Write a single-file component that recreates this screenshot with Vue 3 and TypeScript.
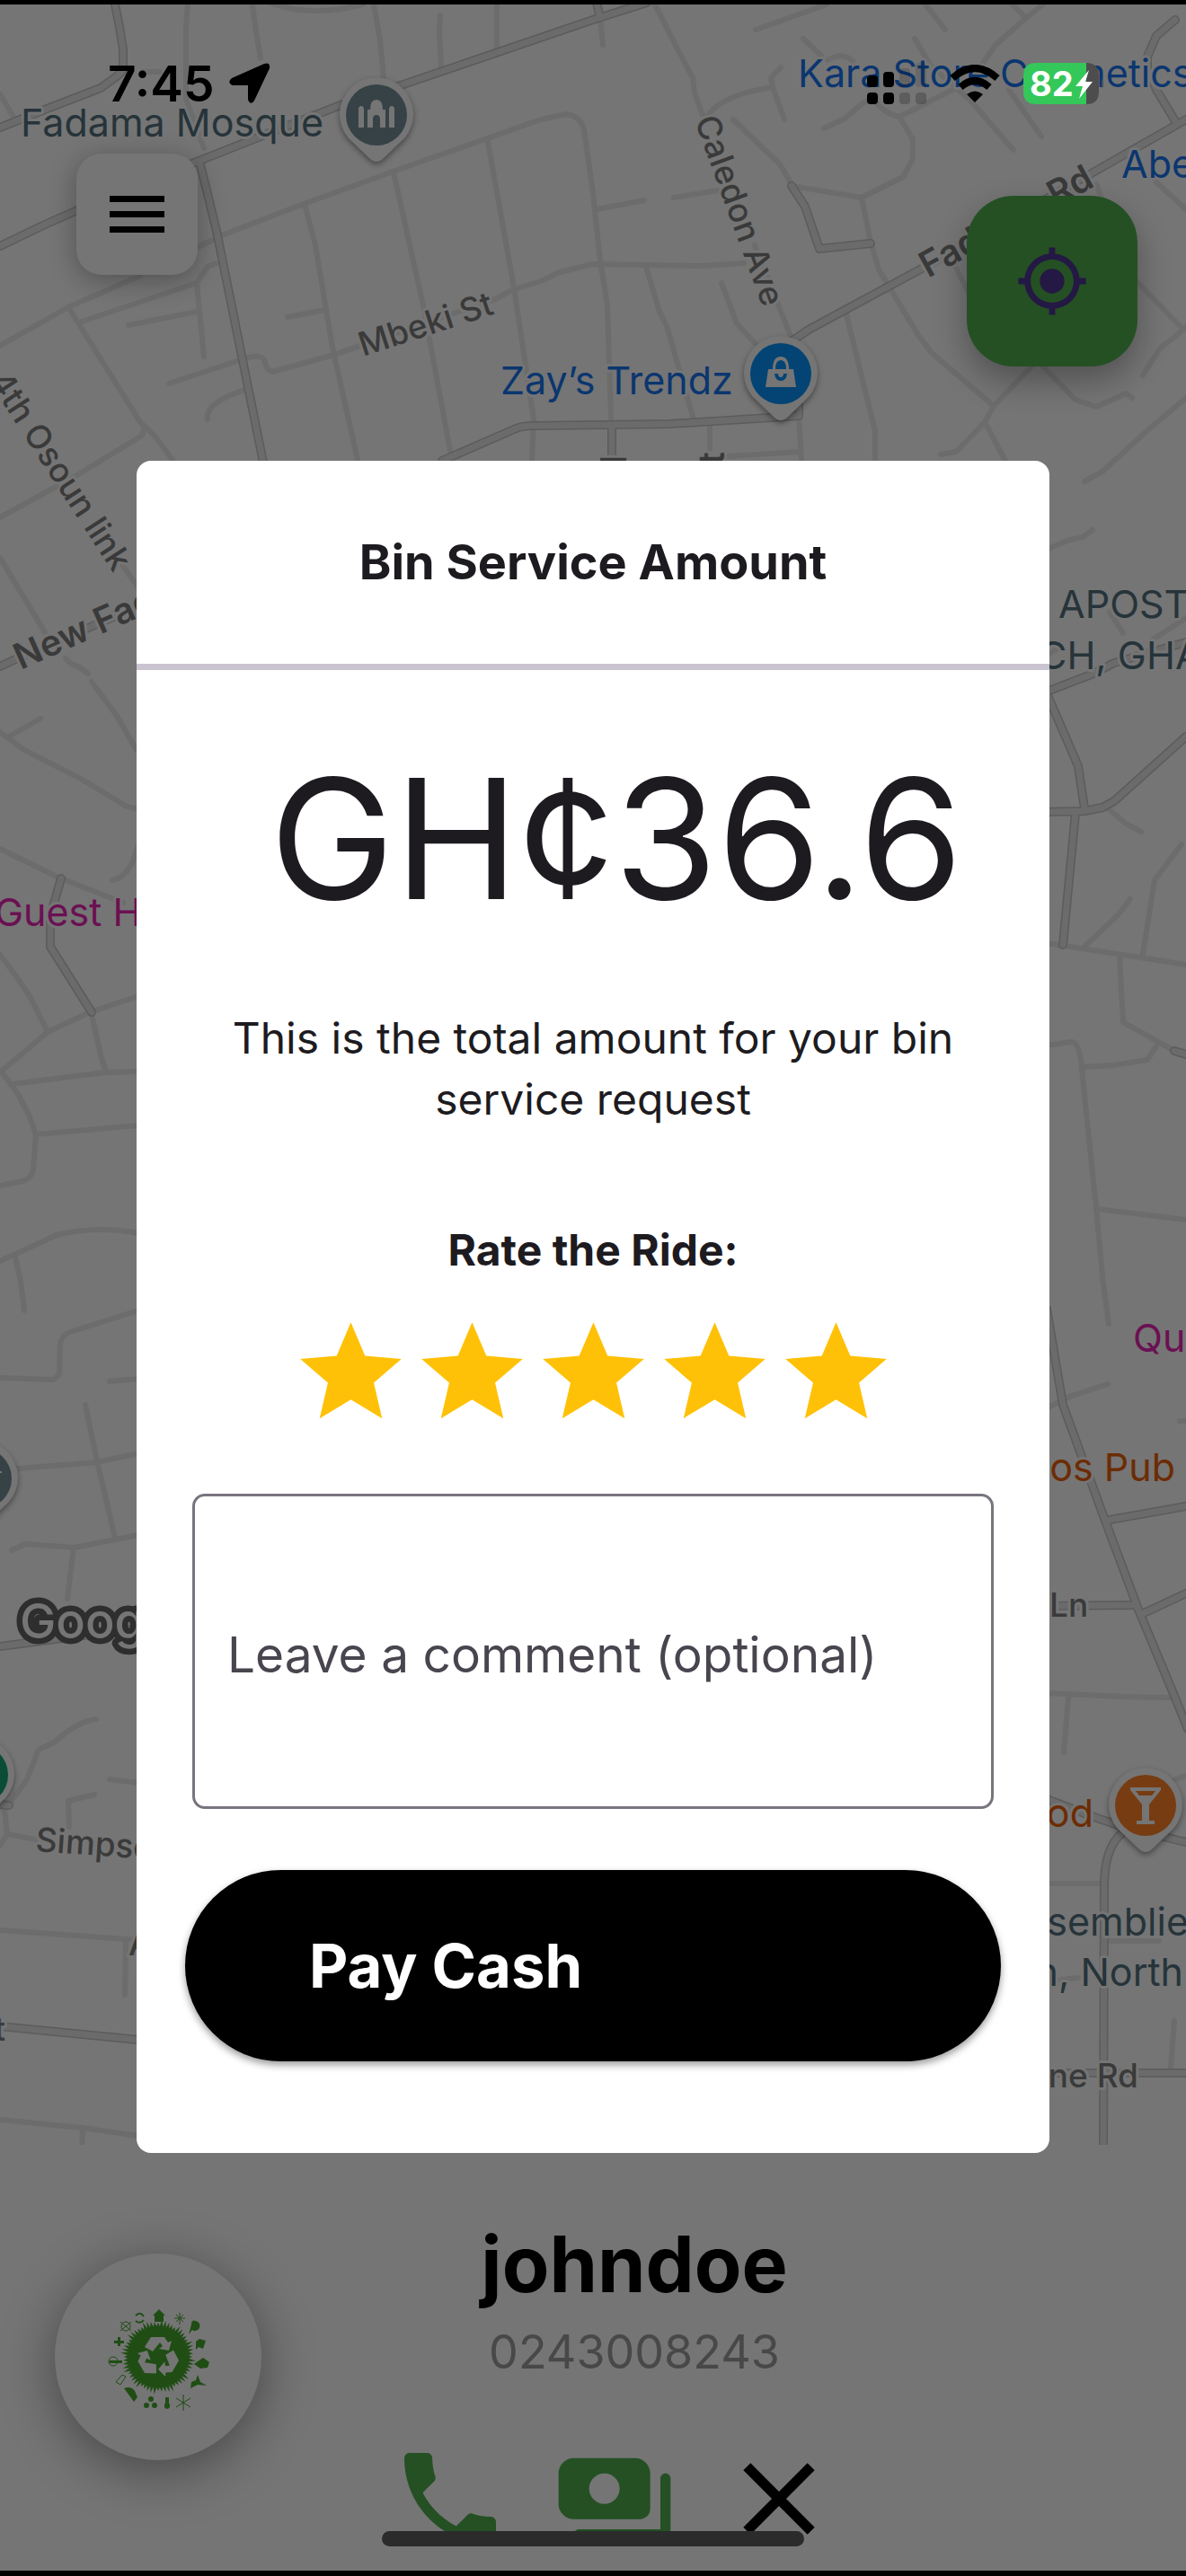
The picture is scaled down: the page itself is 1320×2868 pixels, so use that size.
<script setup lang="ts">
import { ref } from 'vue'

interface Label {
  text: string
  x: number
  y: number
  kind: 'poi' | 'shop' | 'lodging' | 'food' | 'road' | 'highway'
  angle?: number
  anchor?: 'start' | 'end'
}

interface Pin {
  x: number
  y: number
  color: string
  glyph: string
}

const rating = ref(5)
const comment = ref('')
const stars = [1, 2, 3, 4, 5]

const streets: string[] = [
  'M209 5L207 30V110L227 165', 'M281 5L285 35L290 65', 'M300 3Q345 20 404 5', 'M416 5L423 45L427 87',
  'M490 17L489 35L491 75', 'M553 5V53', 'M0 105L15 130', 'M160 80H178',
  'M221 275L247 262L338 227L440 190L602 133L631 127Q647 130 650 145L660 215L668 290L676 340L680 465',
  'M339 227L351 273L370 387L398 512', 'M438 192L471 340L503 512', 'M543 158L572 320L594 467L592 512',
  'M410 382L372 395L303 414Q296 412 294 400Q288 394 273 399L188 427',
  'M380 392L551 333L572 322L602 313L623 303L660 294L782 296L828 293',
  'M320 353L362 345', 'M241 293L231 297L219 315L88 359M219 315L227 397', 'M143 362L219 347',
  'M0 385L76 342L156 307', 'M76 342L156 470L172 485L192 512', 'M160 478L158 485L84 530L0 576',
  'M231 467Q228 448 273 434', 'M720 -10L729 5L748 43L771 87L773 103L782 128', 'M668 20L671 50',
  'M841 33L920 5', 'M1030 5L1052 33', 'M1127 5L1142 20M1161 5L1142 20L1108 50L1094 70',
  'M894 43L914 62M921 67Q938 57 949 68', 'M1018 43L1035 72L1081 113L1128 167', 'M1123 100L1159 152',
  'M788 128Q805 105 860 97L858 87L869 75M860 97L873 133', 'M816 133L868 183L881 205',
  'M881 207L959 220L1005 197L1016 177V155L1001 130Q982 126 970 108M1001 130L1060 100',
  'M917 143L940 132L960 115L975 108',
  'M959 220L969 270L978 300L990 320L1022 373L1037 393L1106 452', 'M840 273L881 377',
  'M803 315L820 360L841 383', 'M719 297L734 347L742 363L772 467', 'M942 350L974 480V513',
  'M664 233L717 223M750 220L799 212', 'M1287 203L1320 233', 'M1220 205L1262 310L1317 367L1291 388L1272 418M1317 367L1320 364',
  'M1060 290L1080 330', 'M1148 408L1106 452L1096 470L1119 513M1096 470L1064 503L1047 506',
  'M1161 408L1197 445L1220 453L1253 438L1260 443', 'M1320 443L1275 481L1227 525L1207 536',
  'M790 472V500M811 508L889 503M889 463L892 513',
  'M0 621L50 704M73 733Q80 741 87 742L98 750M102 759L130 797L152 835', 'M45 800L10 820',
  'M0 815L27 835L90 867L133 893Q142 900 154 900', 'M137 630L154 655', 'M154 940Q146 976 125 980',
  'M0 945L63 976L137 1005', 'M0 1063L13 1080L33 1109L53 1149', 'M0 1194L53 1149L100 1127L154 1109',
  'M102 1129L112 1175L117 1190', 'M13 1207L117 1194L154 1193',
  'M3 1195L20 1218L32 1241L40 1263L37 1303Q34 1313 25 1315L0 1320', 'M40 1263L154 1253',
  'M0 1404L63 1375Q107 1364 154 1373', 'M17 1399L23 1427L27 1459',
  'M0 1534L60 1536L66 1530L67 1495Q70 1486 78 1483L154 1459', 'M122 1538L154 1535', 'M95 1564L108 1627L128 1712',
  'M20 1635L108 1628L154 1618', 'M13 1726L28 1719L83 1723L154 1709', 'M82 1723L75 1780',
  'M107 1914Q87 1916 60 1940L43 1948L30 1981L15 2002L5 2015L8 2042L40 2048M8 2042L0 2055',
  'M122 1981L154 1985', 'M105 1998L76 2005L77 2034', 'M0 2149L154 2160M140 2160L139 2221',
  'M0 2360L92 2369L154 2378M92 2369L91 2400',
  'M1165 612L1190 601L1205 598L1216 590', 'M1283 712L1320 688M1235 681L1250 705M1165 730L1180 720',
  'M1233 900L1253 917L1270 926', 'M1315 940L1285 980L1272 1062', 'M1258 1001L1245 1018L1208 1053',
  'M1165 1050L1320 1074', 'M1246 1065L1250 1138L1307 1170', 'M1165 1164L1192 1160Q1200 1160 1203 1180L1220 1345L1228 1430L1234 1474',
  'M1205 1188L1240 1186L1277 1180L1288 1163', 'M1220 1346L1320 1358', 'M1165 1568L1190 1555L1233 1541',
  'M1313 1582H1320', 'M1165 1885L1250 1889L1303 1890M1189 1890L1184 1951', 'M1305 1982L1320 1977',
  'M1165 2097H1228M1233 2161H1290', 'M1307 2250L1303 2302', 'M1165 2206L1200 2202',
]

const avenues: string[] = [
  'M128 5L133 30L137 55V78L130 85L112 98L55 120L0 142',
  'M662 -5L668 20M720 3L660 22L446 95L379 117L219 180L84 235L50 250L0 274',
  'M222 180L232 220L242 262L293 515', 'M492 513L572 478Q580 474 594 474L745 472L889 463V450',
  'M881 207L896 230L912 277L969 271', 'M881 380L900 367L1024 300L1220 190L1320 133',
  'M1308 22L1287 40L1277 63V75L1287 100L1310 138', 'M681 477V513', 'M0 742L15 735L154 675',
  'M68 978L56 1020V1054L102 1127', 'M0 1833L154 1813', 'M-10 2008L10 2010', 'M-10 2255L154 2271',
  'M1165 770L1217 750L1240 738L1320 715', 'M1165 772L1200 853L1207 900M1165 904L1207 903L1227 899L1240 892L1320 820M1197 905L1183 1052',
  'M1307 1170L1320 1174', 'M1165 1457L1183 1564L1230 1693L1267 1792L1307 1888L1322 1925',
  'M1230 1693L1320 1677', 'M1165 1788L1263 1787M1273 1796L1320 1774', 'M1165 2003L1215 2022L1250 2034L1320 2051',
  'M1250 2040Q1229 2056 1229 2100L1228 2400', 'M1165 2308H1320',
]

const labels: Label[] = [
  { text: 'Fadama Mosque', x: 23, y: 152, kind: 'poi' },
  { text: 'Mbeki St', x: 404, y: 397, kind: 'road', angle: -18 },
  { text: 'Zay’s Trendz', x: 557, y: 439, kind: 'shop' },
  { text: 'Kara Store Cosmetics', x: 888, y: 97, kind: 'shop' },
  { text: 'Abe', x: 1248, y: 198, kind: 'shop' },
  { text: 'Fadama Rd', x: 1033, y: 310, kind: 'highway', angle: -29 },
  { text: 'Caledon Ave', x: 773, y: 134, kind: 'road', angle: 70 },
  { text: '4th Osoun link', x: -13, y: 424, kind: 'road', angle: 57 },
  { text: 'New Fadama', x: 23, y: 746, kind: 'highway', angle: -24 },
  { text: 'Rd', x: 697, y: 507, kind: 'highway', angle: -90, anchor: 'end' },
  { text: 'St', x: 806, y: 503, kind: 'highway', angle: -90, anchor: 'end' },
  { text: 'Guest House', x: -6, y: 1031, kind: 'lodging' },
  { text: 'Simpson', x: 39, y: 2061, kind: 'road', angle: 4 },
  { text: 'A', x: 143, y: 2177, kind: 'road' },
  { text: 'St', x: 6, y: 2272, kind: 'road', anchor: 'end' },
  { text: 'APOST', x: 1178, y: 688, kind: 'poi' },
  { text: 'CH, GHA', x: 1156, y: 745, kind: 'poi' },
  { text: 'Qu', x: 1261, y: 1505, kind: 'lodging' },
  { text: 'tos Pub', x: 1308, y: 1649, kind: 'food', anchor: 'end' },
  { text: 'Ln', x: 1168, y: 1800, kind: 'road' },
  { text: 'Food', x: 1217, y: 2034, kind: 'food', anchor: 'end' },
  { text: 'ssemblie', x: 1323, y: 2155, kind: 'poi', anchor: 'end' },
  { text: 'n, North', x: 1317, y: 2211, kind: 'poi', anchor: 'end' },
  { text: 'ne Rd', x: 1267, y: 2324, kind: 'road', anchor: 'end' },
]

const mosqueGlyph =
  'M-20 14V-6Q-20 -10 -17 -10Q-14 -10 -14 -6V14ZM14 14V-6Q14 -10 17 -10Q20 -10 20 -6V14ZM-10 14V-6H-7Q-7 -17 0 -17Q7 -17 7 -6H10V14H4V5Q4 0 0 0Q-4 0 -4 5V14Z'
const bagGlyph =
  'M-14 -5H-9Q-9 -19 0 -19Q9 -19 9 -5H14L17 15H-17ZM-6 -5H6Q6 -15 0 -15Q-6 -15 -6 -5ZM-7 0Q-6 8 0 8Q6 8 7 0H3Q3 4 0 4Q-3 4 -3 0Z'
const glassGlyph = 'M-17 -20H17V-17L4 -1V17H10V21H-10V17H-4V-1L-17 -17ZM-11 -16L-7 -11H7L11 -16Z'

const pins: Pin[] = [
  { x: 419, y: 128, color: '#364246', glyph: mosqueGlyph },
  { x: 869, y: 416, color: '#034474', glyph: bagGlyph },
  { x: 1275, y: 2010, color: '#773c11', glyph: glassGlyph },
  { x: -21, y: 1646, color: '#364246', glyph: 'M-20 -8H23V-6H-20Z' },
  { x: -25, y: 1976, color: '#0a4c36', glyph: '' },
]

const burst = Array.from({ length: 120 }, (_, i) => {
  const radius = i % 2 ? 34 : 38 + ((i * 7) % 5)
  const a = (i / 120) * Math.PI * 2
  return `${(Math.cos(a) * radius).toFixed(1)},${(Math.sin(a) * radius).toFixed(1)}`
}).join(' ')
</script>

<template>
  <main class="screen">
    <svg class="map" viewBox="0 0 1320 2388" aria-label="Map">
      <g class="streets">
        <path v-for="d in streets" :key="d" :d="d" />
      </g>
      <g class="avenue-edges">
        <path v-for="d in avenues" :key="d" :d="d" />
      </g>
      <g class="avenues">
        <path v-for="d in avenues" :key="d" :d="d" />
      </g>
      <text
        v-for="l in labels"
        :key="l.text + l.y"
        class="label"
        :class="l.kind"
        :text-anchor="l.anchor ?? 'start'"
        :transform="`translate(${l.x} ${l.y}) rotate(${l.angle ?? 0})`"
      >{{ l.text }}</text>
      <text class="google" x="22" y="1824">Google</text>
      <g v-for="p in pins" :key="p.x" class="pin" :transform="`translate(${p.x} ${p.y})`">
        <path class="drop" d="M-8 48Q0 56 8 48L31 26A41 41 0 1 0 -31 26Z" />
        <circle r="34" :fill="p.color" />
        <path :d="p.glyph" fill="#757575" fill-rule="evenodd" />
      </g>
    </svg>

    <header class="status">
      <div class="status-side">
        <time class="clock">7:45</time>
        <svg class="arrow" viewBox="0 0 46 46" aria-hidden="true">
          <path d="M39 1Q46 -1 45 6L28 42Q24 48 21 41V25H4Q-3 22 3 17Z" />
        </svg>
      </div>
      <div class="status-side right">
        <svg class="signal" viewBox="0 0 66 46" aria-label="Signal">
          <rect y="14" width="12" height="13" rx="4" />
          <rect x="18" y="10" width="12" height="17" rx="4" />
          <rect x="36" y="6" width="12" height="21" rx="4" opacity=".15" />
          <rect x="54" y="0" width="12" height="27" rx="4" opacity=".1" />
          <rect y="33" width="12" height="13" rx="4" />
          <rect x="18" y="33" width="12" height="13" rx="4" />
          <rect x="36" y="33" width="12" height="13" rx="4" opacity=".2" />
          <rect x="54" y="33" width="12" height="13" rx="4" opacity=".2" />
        </svg>
        <svg class="wifi" viewBox="0 0 56 42" aria-label="Wi-Fi">
          <path d="M3 15Q28 -7 53 15M12 25Q28 11 44 25" fill="none" stroke="#000" stroke-width="8" />
          <path d="M19 33Q28 26 37 33L28 42Z" />
        </svg>
        <svg class="battery" viewBox="0 0 90 46" aria-label="Battery">
          <path d="M14 0H70V46H14Q0 46 0 32V14Q0 0 14 0Z" fill="#34c759" />
          <path d="M70 0Q84 0 84 14V32Q84 46 70 46Z" fill="#4d4d4d" />
          <path d="M87 17Q90 23 87 29Z" fill="#4d4d4d" />
          <text x="7" y="37">82</text>
          <path d="M73 8L58 26H66L62 40L77 21H69Z" fill="#fff" />
        </svg>
      </div>
    </header>

    <nav class="controls">
      <button class="menu" type="button" aria-label="Menu">
        <svg viewBox="0 0 61 41"><path d="M0 0H61V7H0ZM0 17H61V24H0ZM0 34H61V41H0Z" /></svg>
      </button>
      <button class="locate" type="button" aria-label="My location">
        <svg viewBox="0 0 24 24">
          <path d="M12 8c-2.21 0-4 1.79-4 4s1.79 4 4 4 4-1.79 4-4-1.79-4-4-4zm8.94 3c-.46-4.17-3.77-7.48-7.94-7.94V1h-2v2.06C6.83 3.52 3.52 6.83 3.06 11H1v2h2.06c.46 4.17 3.77 7.48 7.94 7.94V23h2v-2.06c4.17-.46 7.48-3.77 7.94-7.94H23v-2h-2.06zM12 19c-3.87 0-7-3.13-7-7s3.13-7 7-7 7 3.13 7 7-3.13 7-7 7z" />
        </svg>
      </button>
    </nav>

    <section class="dialog" role="dialog" aria-labelledby="dialog-title">
      <h1 id="dialog-title">Bin Service Amount</h1>
      <form class="body" @submit.prevent>
        <p class="amount">GH¢36.6</p>
        <p class="note">This is the total amount for your bin service request</p>
        <h2>Rate the Ride:</h2>
        <div class="stars">
          <button
            v-for="n in stars"
            :key="n"
            type="button"
            :class="{ off: n > rating }"
            :aria-label="`${n} stars`"
            @click="rating = n"
          >
            <svg viewBox="0 0 24 24">
              <path d="M12 17.27L18.18 21l-1.64-7.03L22 9.24l-7.19-.61L12 2 9.19 8.63 2 9.24l5.46 4.73L5.82 21z" />
            </svg>
          </button>
        </div>
        <textarea v-model="comment" aria-label="Comment" placeholder="Leave a comment (optional)"></textarea>
        <button class="pay" type="submit">Pay Cash</button>
      </form>
    </section>

    <footer class="rider">
      <div class="avatar">
        <svg viewBox="-60 -60 120 120" aria-label="Recycling">
          <polygon :points="burst" />
          <g v-for="a in [0, 120, 240]" :key="a" class="arrow-part" :transform="`rotate(${a})`">
            <path d="M-15 -11L-8 -22H7L11 -16L15 -18L12 -7L1 -9L5 -12L2 -16L-6 -6Z" />
          </g>
          <g class="charms">
            <path d="M-6 -46L1 -53L8 -46H6V-39H-4V-46Z" />
            <path d="M-25 -46Q-20 -51 -16 -45M-16 -41Q-20 -36 -25 -40" class="line" />
            <path d="M24 -49V-36M18 -43H30M20 -47L28 -39M28 -47L20 -39" class="line thin" />
            <path d="M37 -36Q37 -42 42 -40Q48 -38 46 -32Q42 -27 38 -30L34 -25Z" />
            <path d="M42 -17L46 -20L53 -18L50 -9L45 -11L42 -8Z" />
            <path d="M44 5L50 1L57 6L55 12L47 13L40 8Z" />
            <path d="M37 28L42 26L44 20L47 28L54 32L44 31L36 35Z" />
            <path d="M28 42V60M20 46L36 56M36 46L20 56" class="line thin" />
            <path d="M8 45H12V51Q15 57 10 58Q5 57 8 51Z" />
            <circle cx="-8" cy="47" r="3" /><circle cx="-13" cy="54" r="3" /><circle cx="-4" cy="54" r="3" />
            <path d="M-38 35Q-30 32 -26 38L-23 45L-27 50Q-32 43 -38 35Z" />
            <path d="M-47 28L-40 20L-36 22L-42 31Z" class="line thin" />
            <circle cx="-50" cy="5" r="5" class="line thin" /><path d="M-54 4H-40V7H-54Z" />
            <path d="M-49 -18H-38V-15H-49ZM-45 -22H-42V-12H-45Z" />
            <circle cx="-36" cy="-34" r="5" class="line thin" />
            <path d="M-42 -39L-30 -29M-30 -39L-42 -29" class="line thin" />
          </g>
        </svg>
      </div>
      <div class="details">
        <strong>johndoe</strong>
        <span>0243008243</span>
        <div class="actions">
          <button type="button" aria-label="Call">
            <svg viewBox="0 0 24 24">
              <path d="M6.62 10.79c1.44 2.83 3.76 5.14 6.59 6.59l2.2-2.2c.27-.27.67-.36 1.02-.24 1.12.37 2.33.57 3.57.57.55 0 1 .45 1 1V20c0 .55-.45 1-1 1-9.39 0-17-7.61-17-17 0-.55.45-1 1-1h3.5c.55 0 1 .45 1 1 0 1.25.2 2.45.57 3.57.11.35.03.74-.25 1.02l-2.2 2.2z" />
            </svg>
          </button>
          <button type="button" aria-label="Payment">
            <svg viewBox="0 0 24 24">
              <path d="M19 14V7c0-1.660-1.340-3-3-3H4C2.340 4 1 5.340 1 7v6c0 1.660 1.340 3 3 3h13c1.100 0 2-.9 2-2zm-9-1c-1.660 0-3-1.340-3-3s1.340-3 3-3 3 1.340 3 3-1.340 3-3 3zm13-5v10c0 1.100-.9 2-2 2H5c-.55 0-1-.45-1-1s.45-1 1-1h16V8c0-.55.45-1 1-1s1 .45 1 1z" />
            </svg>
          </button>
          <button class="close" type="button" aria-label="Close">
            <svg viewBox="0 0 24 24">
              <path d="M19 6.410L17.590 5 12 10.590 6.410 5 5 6.410 10.590 12 5 17.590 6.410 19 12 13.410 17.590 19 19 17.590 13.410 12z" />
            </svg>
          </button>
        </div>
      </div>
    </footer>

    <div class="home-indicator"></div>
  </main>
</template>

<style>
body {
  margin: 0;
  background: #757575;
}
</style>

<style scoped>
.screen {
  position: relative;
  box-sizing: border-box;
  min-height: 100vh;
  overflow: hidden;
  border-top: 5px solid #000;
  border-bottom: 6px solid #000;
  background: #757575;
  color: #1d1b20;
  font-family: Inter, "Liberation Sans", sans-serif;
}

button {
  padding: 0;
  border: 0;
  background: none;
  font-family: inherit;
  cursor: pointer;
}

svg {
  display: block;
}

.map {
  position: absolute;
  top: -5px;
  left: 0;
  width: 100%;
  height: auto;
}

.streets path,
.avenue-edges path,
.avenues path {
  fill: none;
  stroke: #6c6c6c;
  stroke-width: 6px;
  stroke-linecap: round;
  stroke-linejoin: round;
}

.avenue-edges path {
  stroke: #5c5c5c;
  stroke-width: 10px;
}

.avenues path {
  stroke: #6b6b6b;
  stroke-width: 7px;
}

.label {
  font-size: 43px;
  paint-order: stroke;
  stroke: #757575;
  stroke-width: 6px;
  stroke-linejoin: round;
}

.poi {
  fill: #26343a;
}

.shop {
  fill: #0b366f;
}

.lodging {
  fill: #6b1053;
}

.food {
  fill: #6c2c04;
}

.road,
.highway {
  fill: #3a3a3a;
  font-size: 37px;
  font-weight: 500;
}

.highway {
  font-size: 40px;
  font-weight: 600;
}

.google {
  fill: #757575;
  paint-order: stroke;
  stroke: #2e2e2e;
  stroke-width: 13px;
  stroke-linejoin: round;
  font-size: 54px;
  font-weight: 500;
}

.pin {
  filter: drop-shadow(0 3px 3px rgba(0, 0, 0, 0.4));
}

.drop {
  fill: #757575;
}

.status {
  position: relative;
  box-sizing: border-box;
  display: flex;
  align-items: center;
  justify-content: space-between;
  height: 166px;
  padding: 10px 91px 0 120px;
}

.status-side {
  display: flex;
  align-items: center;
  gap: 16px;
}

.right {
  gap: 26px;
}

.clock {
  color: #000;
  font-size: 55px;
  font-weight: 600;
  line-height: 64px;
}

.arrow {
  width: 46px;
  height: 46px;
}

.signal {
  width: 66px;
  height: 46px;
}

.wifi {
  width: 56px;
  height: 42px;
}

.battery {
  width: 90px;
  height: 46px;
}

.battery text {
  fill: #fff;
  font-size: 38px;
  font-weight: 700;
}

.controls {
  position: relative;
  box-sizing: border-box;
  display: flex;
  align-items: flex-start;
  justify-content: space-between;
  height: 342px;
  padding: 0 54px 0 85px;
}

.menu,
.locate {
  display: flex;
  align-items: center;
  justify-content: center;
}

.menu {
  width: 135px;
  height: 135px;
  border-radius: 28px;
  background: #757575;
  box-shadow: 0 6px 30px rgba(0, 0, 0, 0.3);
}

.menu svg {
  width: 61px;
}

.locate {
  width: 190px;
  height: 190px;
  margin-top: 47px;
  border-radius: 52px;
  background: #245024;
  box-shadow: 0 16px 36px rgba(0, 0, 0, 0.3);
}

.locate svg {
  width: 82px;
  fill: #241844;
}

.dialog {
  position: relative;
  margin: 0 152px;
  border-radius: 16px;
  background: #fff;
}

h1,
h2,
p {
  margin: 0;
  text-align: center;
}

h1 {
  border-bottom: 7px solid #cac4d0;
  font-size: 54px;
  font-weight: 700;
  line-height: 226px;
}

.body {
  display: flex;
  flex-direction: column;
  padding: 78px 54px 102px;
}

.amount {
  padding-left: 52px;
  font-size: 186px;
  line-height: 220px;
  white-space: nowrap;
}

.note {
  margin-top: 78px;
  font-size: 48px;
  line-height: 68px;
}

h2 {
  margin-top: 100px;
  font-size: 48px;
  font-weight: 700;
  line-height: 68px;
}

.stars {
  display: flex;
  justify-content: center;
  margin-top: 35px;
}

.stars svg {
  width: 135px;
  height: 135px;
  fill: #ffc107;
}

.stars .off svg {
  fill: #cac4d0;
}

textarea {
  box-sizing: border-box;
  height: 351px;
  margin: 67px 8px 0;
  padding: 140px 36px 0;
  border: 3px solid #79747e;
  border-radius: 14px;
  outline: none;
  background: transparent;
  color: #1d1b20;
  font-family: inherit;
  font-size: 55px;
  line-height: 72px;
  resize: none;
}

textarea::placeholder {
  color: #49454f;
  opacity: 1;
}

.pay {
  height: 213px;
  margin-top: 68px;
  padding-left: 138px;
  border-radius: 107px;
  background: #000;
  box-shadow: 0 4px 8px rgba(0, 0, 0, 0.4);
  color: #fff;
  font-size: 67px;
  font-weight: 700;
  text-align: left;
}

.rider {
  position: relative;
  display: flex;
  align-items: flex-start;
  padding: 74px 61px 11px;
}

.avatar {
  display: flex;
  flex: none;
  align-items: center;
  justify-content: center;
  width: 230px;
  height: 230px;
  margin-top: 38px;
  border-radius: 50%;
  background: #757575;
  box-shadow: 0 12px 60px rgba(0, 0, 0, 0.4);
}

.avatar svg {
  width: 120px;
  fill: #1f4d14;
}

.avatar .arrow-part {
  fill: #757575;
}

.line {
  fill: none;
  stroke: #1f4d14;
  stroke-width: 2px;
}

.thin {
  stroke-width: 1px;
}

.details {
  display: flex;
  flex-direction: column;
  width: 546px;
  margin-left: 142px;
  text-align: center;
}

.details strong {
  color: #000;
  font-size: 86px;
  font-weight: 700;
  line-height: 100px;
}

.details span {
  margin-top: 16px;
  color: #484848;
  font-size: 52px;
  line-height: 64px;
}

.actions {
  display: flex;
  gap: 47px;
  margin-top: 63px;
}

.actions svg {
  width: 136px;
  height: 136px;
  fill: #245024;
}

.actions .close svg {
  fill: #000;
}

.home-indicator {
  position: absolute;
  bottom: 27px;
  left: 50%;
  width: 470px;
  height: 17px;
  margin-left: -235px;
  border-radius: 9px;
  background: #2b2b2b;
}
</style>
